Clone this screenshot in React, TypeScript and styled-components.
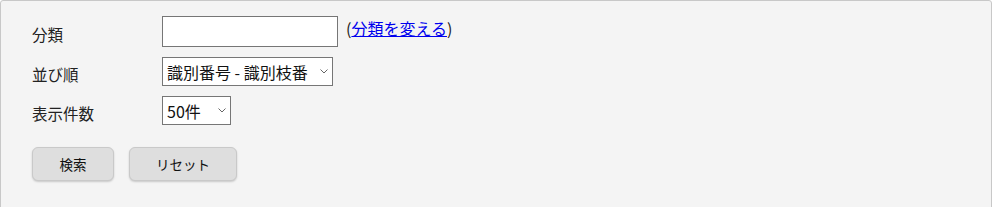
import React from 'react';
import styled, { createGlobalStyle } from 'styled-components';

const GlobalStyle = createGlobalStyle`
  html, body {
    margin: 0;
    padding: 0;
    background: #fff;
  }
  body {
    font-family: "Noto Sans CJK JP", "Noto Sans", sans-serif;
    color: #222;
  }
`;

const Panel = styled.form`
  box-sizing: border-box;
  width: 992px;
  min-height: 230px;
  padding: 15px 31px 30px;
  background: #f4f4f4;
  border: 1px solid #c8c8c8;
  border-radius: 3px;
`;

const Fields = styled.div`
  display: grid;
  grid-template-columns: 130px auto;
  row-gap: 10px;
`;

const Label = styled.div`
  display: flex;
  align-items: center;
  padding-top: 5px;
  font-size: 15.5px;
  line-height: 20px;
  color: #222;
`;

const Control = styled.div`
  display: flex;
  align-items: flex-start;
  gap: 8px;
`;

const TextInput = styled.input`
  box-sizing: border-box;
  width: 176px;
  height: 31px;
  margin: 0;
  padding: 2px 6px;
  border: 1px solid #767676;
  background: #fff;
  font: inherit;
  font-size: 15px;
  outline: none;
`;

const Note = styled.span`
  margin-top: 1px;
  font-size: 16px;
  line-height: 22px;
  color: #222;
`;

const Link = styled.a`
  color: #0000ee;
  text-decoration: underline;
  cursor: pointer;
`;

const SelectWrap = styled.div<{ $width: number }>`
  position: relative;
  width: ${(p) => p.$width}px;
`;

const Select = styled.select`
  box-sizing: border-box;
  width: 100%;
  height: 29px;
  margin: 0;
  padding: 0 18px 0 4px;
  border: 1px solid #767676;
  border-radius: 0;
  background: #fff;
  appearance: none;
  font-family: inherit;
  font-size: 16px;
  color: #111;
  outline: none;
`;

const Chevron = styled.svg`
  position: absolute;
  right: 5px;
  top: 12px;
  width: 8px;
  height: 5px;
  pointer-events: none;
`;

const Buttons = styled.div`
  display: flex;
  gap: 15px;
  margin-top: 22px;
`;

const Button = styled.button<{ $width: number }>`
  box-sizing: border-box;
  width: ${(p) => p.$width}px;
  height: 34px;
  border: 1px solid #c9c9c9;
  border-radius: 6px;
  background: #dedede;
  box-shadow: 0 1px 2px rgba(0, 0, 0, 0.18);
  font-family: inherit;
  font-size: 13.5px;
  color: #111;
  cursor: pointer;
`;

const Arrow = () => (
  <Chevron viewBox="0 0 8 5">
    <path d="M0.5 0.5 L4 4 L7.5 0.5" fill="none" stroke="#666" strokeWidth="1" />
  </Chevron>
);

const App = () => {
  return (
    <>
      <GlobalStyle />
      <Panel onSubmit={(e) => e.preventDefault()}>
        <Fields>
          <Label>分類</Label>
          <Control>
            <TextInput type="text" />
            <Note>
              (<Link>分類を変える</Link>)
            </Note>
          </Control>

          <Label>並び順</Label>
          <Control>
            <SelectWrap $width={171}>
              <Select defaultValue="id">
                <option value="id">識別番号 - 識別枝番</option>
              </Select>
              <Arrow />
            </SelectWrap>
          </Control>

          <Label>表示件数</Label>
          <Control>
            <SelectWrap $width={69}>
              <Select defaultValue="50">
                <option value="50">50件</option>
              </Select>
              <Arrow />
            </SelectWrap>
          </Control>
        </Fields>

        <Buttons>
          <Button type="submit" $width={82}>検索</Button>
          <Button type="reset" $width={108}>リセット</Button>
        </Buttons>
      </Panel>
    </>
  );
};

export default App;
